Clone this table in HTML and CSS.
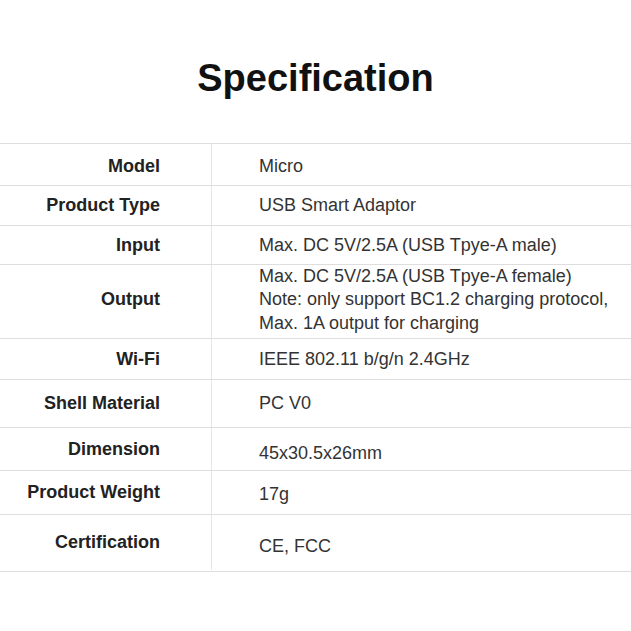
FILE: index.html
```html
<!DOCTYPE html>
<html lang="en">
<head>
<meta charset="utf-8">
<title>Specification</title>
<link rel="stylesheet" href="styles.css">
</head>
<body>
<div class="page">
  <h1 class="title">Specification</h1>
  <div class="spec">
    <div class="row first"><div class="label">Model</div><div class="value">Micro</div></div>
    <div class="row"><div class="label">Product Type</div><div class="value">USB Smart Adaptor</div></div>
    <div class="row"><div class="label">Input</div><div class="value">Max. DC 5V/2.5A (USB Tpye-A male)</div></div>
    <div class="row output"><div class="label">Output</div><div class="value multi">Max. DC 5V/2.5A (USB Tpye-A female)<br>Note: only support BC1.2 charging protocol,<br>Max. 1A output for charging</div></div>
    <div class="row"><div class="label">Wi-Fi</div><div class="value">IEEE 802.11 b/g/n 2.4GHz</div></div>
    <div class="row"><div class="label">Shell Material</div><div class="value">PC V0</div></div>
    <div class="row"><div class="label">Dimension</div><div class="value shift4">45x30.5x26mm</div></div>
    <div class="row"><div class="label">Product Weight</div><div class="value shift2">17g</div></div>
    <div class="row last"><div class="label">Certification</div><div class="value shift3">CE, FCC</div></div>
  </div>
</div>
</body>
</html>
```

FILE: styles.css
```css
html, body {
  margin: 0;
  padding: 0;
  background: #ffffff;
}

.page {
  width: 631px;
  font-family: "Liberation Sans", Arial, sans-serif;
}

.title {
  margin: 0;
  padding: 59px 0 46px;
  font-size: 38px;
  line-height: 38px;
  font-weight: bold;
  text-align: center;
  color: #111111;
}

.spec {
  border-top: 1px solid #dedede;
}

.row {
  display: flex;
  box-sizing: border-box;
  border-bottom: 1px solid #dedede;
}

.row:nth-child(1) { height: 42px; }
.row:nth-child(2) { height: 40px; }
.row:nth-child(3) { height: 39px; }
.row:nth-child(4) { height: 74px; }
.row:nth-child(5) { height: 41px; }
.row:nth-child(6) { height: 48px; }
.row:nth-child(7) { height: 43px; }
.row:nth-child(8) { height: 44px; }
.row:nth-child(9) { height: 57px; }

.label {
  box-sizing: border-box;
  width: 212px;
  flex: none;
  padding-right: 51px;
  border-right: 1px solid #e6e6e6;
  display: flex;
  align-items: center;
  justify-content: flex-end;
  font-size: 18px;
  font-weight: bold;
  color: #222222;
}

.row.first .label,
.row.first .value {
  padding-top: 4px;
}

.row.output .label {
  padding-bottom: 4px;
}

.row.last .label {
  margin-bottom: 1px;
}

.value {
  flex: 1;
  padding-left: 47px;
  display: flex;
  align-items: center;
  font-size: 18px;
  color: #333333;
}

.value.multi {
  display: block;
  align-self: center;
  line-height: 23.5px;
  margin-top: -3px;
}

.value.shift4 { padding-top: 8px; }
.value.shift2 { padding-top: 4px; }
.value.shift3 { padding-top: 6px; }
```
